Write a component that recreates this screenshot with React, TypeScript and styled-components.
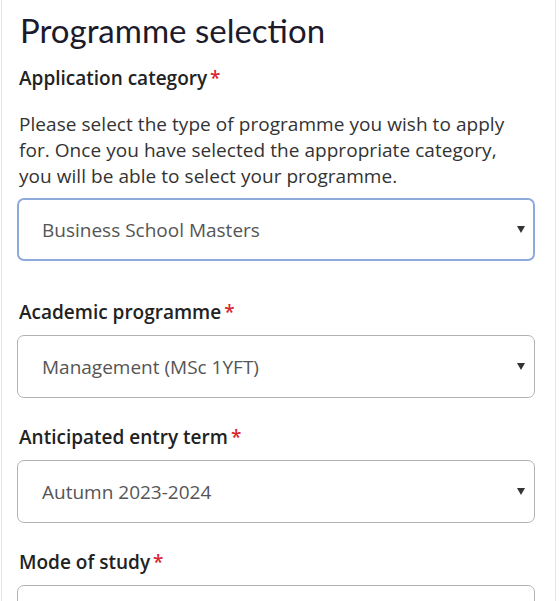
import * as React from 'react';
import styled, { createGlobalStyle } from 'styled-components';

const GlobalStyle = createGlobalStyle`
  html, body {
    margin: 0;
    padding: 0;
    background: #ffffff;
  }
  body {
    font-family: 'Open Sans', 'Liberation Sans', sans-serif;
    color: #333;
  }
`;

const Card = styled.div`
  margin-left: 1px;
  width: 555px;
  height: 601px;
  box-sizing: border-box;
  border-left: 1px solid #e6e6e6;
  border-right: 1px solid #e6e6e6;
  padding: 10px 20px 0 15px;
  overflow: hidden;
`;

const Title = styled.h1`
  margin: 0 0 15px;
  font-family: 'Lato', 'Open Sans', sans-serif;
  font-weight: 400;
  font-size: 33px;
  line-height: 40px;
  color: #1b1b2b;
  padding-left: 3px;
`;

const Field = styled.div<{ $gap?: number }>`
  margin-top: ${(p) => p.$gap ?? 0}px;
`;

const Label = styled.label`
  display: block;
  font-weight: 600;
  font-size: 19px;
  line-height: 26px;
  color: #222;
  padding-left: 2px;
  margin-bottom: 10px;
`;

const Required = styled.span`
  color: #d8262f;
  margin-left: 3px;
`;

const Help = styled.p`
  margin: 20px 0 9px;
  padding: 0 14px 0 2px;
  font-size: 19px;
  line-height: 26px;
  letter-spacing: 0.05px;
  color: #333;
`;

const SelectBox = styled.div<{ $focused?: boolean }>`
  height: 63px;
  box-sizing: border-box;
  display: flex;
  align-items: center;
  padding: ${(p) => (p.$focused ? '0 8px 0 23px' : '0 9px 0 24px')};
  border: ${(p) => (p.$focused ? '2px solid #8eaadb' : '1px solid #b3b3b3')};
  border-radius: 7px;
  background: #fff;
  font-size: 19px;
  color: #555;
`;

const Value = styled.span`
  flex: 1;
`;

const Caret = styled.span`
  width: 0;
  height: 0;
  border-left: 4px solid transparent;
  border-right: 4px solid transparent;
  border-top: 7px solid #333;
`;

function Select({ value, focused }: { value: string; focused?: boolean }) {
  return (
    <SelectBox $focused={focused}>
      <Value>{value}</Value>
      <Caret />
    </SelectBox>
  );
}

export default function App() {
  return (
    <>
      <GlobalStyle />
      <Card>
        <Title>Programme selection</Title>
        <Field>
          <Label>
            Application category<Required>*</Required>
          </Label>
          <Help>
            Please select the type of programme you wish to apply for. Once you have selected the
            appropriate category, you will be able to select your programme.
          </Help>
          <Select value="Business School Masters" focused />
        </Field>
        <Field $gap={38}>
          <Label>
            Academic programme<Required>*</Required>
          </Label>
          <Select value="Management (MSc 1YFT)" />
        </Field>
        <Field $gap={26}>
          <Label>
            Anticipated entry term<Required>*</Required>
          </Label>
          <Select value="Autumn 2023-2024" />
        </Field>
        <Field $gap={26}>
          <Label>
            Mode of study<Required>*</Required>
          </Label>
          <Select value="" />
        </Field>
      </Card>
    </>
  );
}
